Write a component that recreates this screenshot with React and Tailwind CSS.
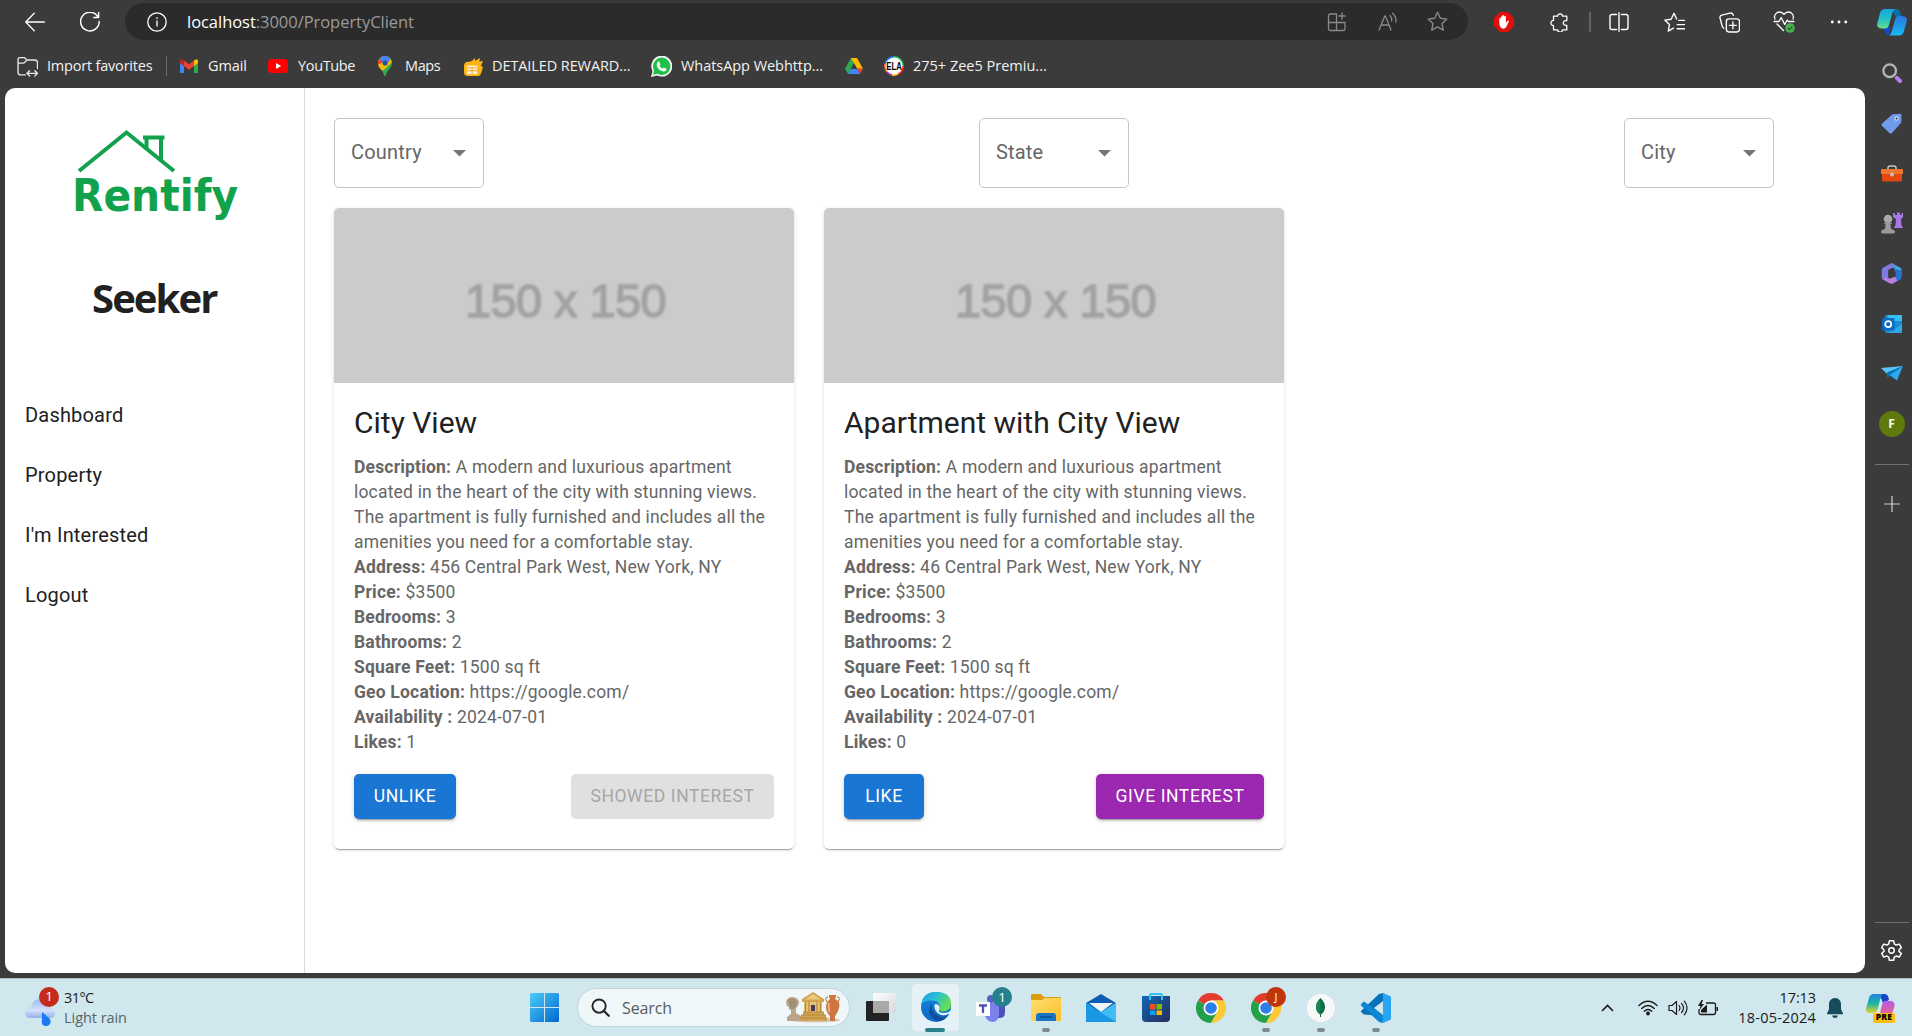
import React from "react";

const Svg = ({ w = 20, h, vb = "0 0 20 20", className = "", children }) => (
  <svg width={w} height={h || w} viewBox={vb} fill="none" className={"shrink-0 " + className}>
    {children}
  </svg>
);

const Line = ({ w = 20, c = "#fff", s = 1.3, vb, children }) => (
  <Svg w={w} vb={vb}>
    <g stroke={c} strokeWidth={s} strokeLinecap="round" strokeLinejoin="round">{children}</g>
  </Svg>
);

const STAR = "M10 1.2l2.7 5.7 6.2.8-4.6 4.3 1.2 6.2L10 15.2l-5.5 3 1.2-6.2L1.1 7.7l6.2-.8z";

/* ---------- browser toolbar ---------- */

const Cell = ({ className = "", children }) => (
  <div className={"flex h-full shrink-0 items-center justify-center " + className}>{children}</div>
);

function Toolbar() {
  return (
    <div className="flex h-[44px] items-center">
      <Cell className="ml-[20px] w-[30px]">
        <Line><path d="M19.4 10H1M9.2 1.3L.8 10l8.400 8.700" /></Line>
      </Cell>
      <Cell className="ml-[25px] w-[30px]">
        <Line s={1.5}><path d="M17.700 4.500A9.300 9.300 0 1 0 19.200 9.500M18.600 .6v4.800h-4.800" /></Line>
      </Cell>
      <div className="-mt-px ml-[20px] flex h-[37px] w-[1343px] items-center rounded-full bg-[#2b2b2b]">
        <Cell className="ml-[17px] w-[30px]">
          <Line s={1.300}><circle cx="10" cy="10" r="9.200" /><path d="M10 9v5" /><path d="M10 6v.1" strokeWidth="1.700" /></Line>
        </Cell>
        <span className="ml-[15px] mt-[1px] w-[900px] whitespace-nowrap font-['Open_Sans'] text-[16.500px] tracking-[-0.040px] text-[#9a9a9a]">
          <span className="text-white">localhost</span>:3000/PropertyClient
        </span>
        <Cell className="ml-auto w-[30px]">
          <Line w={20} c="#8a8a8a"><path d="M9.500 2H3.300Q1.500 2 1.500 3.800v13Q1.500 18.500 3.300 18.500h13.200q1.500 0 1.500-1.700V10.500H1.500M9.500 2v16.500M15 .8v6.400M11.800 4h6.400" /></Line>
        </Cell>
        <Cell className="ml-[21px] w-[30px]">
          <Line w={20} c="#8a8a8a"><path d="M1 18L6.800 4h.6L13 18M3 13h8M12 3.500q2.200 2.200 1.700 5.500M14.500 1.200q4.300 3.700 3.300 8.800" /></Line>
        </Cell>
        <Cell className="ml-[19px] mr-[16px] w-[30px]">
          <Line w={21} c="#8a8a8a"><path d={STAR} /></Line>
        </Cell>
      </div>
      <Cell className="ml-[22px] w-[28px]">
        <Svg w={20}>
          <path d="M6 0h8l6 6v8l-6 6H6l-6-6V6z" fill="#e40d0d" />
          <path d="M5.300 10V6.500q.8-1 1.500 0V4.700q.8-1.100 1.600 0V3.600q.9-1.100 1.800 0v1q.9-1 1.700 0v6.200l1.500-1.700q1.100-.7 1.700 0l-3 6.200Q10 18 7 15.800q-1.700-1.500-1.700-5.800z" fill="#fff" />
        </Svg>
      </Cell>
      <Cell className="ml-[28px] w-[28px]">
        <Line><path d="M3.500 4.200h4.200a2.400 2.400 0 1 1 4.800 0h4.300v4.500h-1.200a2.300 2.300 0 1 0 0 4.600h1.200v4.500h-4.300a2.400 2.400 0 0 1-4.800 0H3.500v-4.200a2.600 2.600 0 1 1 0-5.200z" /></Line>
      </Cell>
      <div className="ml-[15px] h-[20px] w-[2px] bg-[#646464]" />
      <Cell className="ml-[13px] w-[30px]">
        <Line s={1.400}><path d="M7.500 2.500H3Q1 2.500 1 4.500v11q0 2 2 2h4.500M12.500 2.500H17q2 0 2 2v11q0 2-2 2h-4.500M10 .7v18.600" /></Line>
      </Cell>
      <Cell className="ml-[25px] w-[30px]">
        <Line w={21}><path d="M12 6.700L9.500 1.200 6.800 6.900.7 7.700l4.500 4.300-1.100 6.200L9 15.400M14 8h5.500M12.500 12h7M12.500 16h7" /></Line>
      </Cell>
      <Cell className="ml-[25px] w-[30px]">
        <Line w={21}><rect x="7" y="6.500" width="12.500" height="12.500" rx="2.500" /><path d="M13.250 9.500v6.500M10 12.750h6.500M4.500 15.500Q3 14.500 2.600 12L1 5.700Q.6 3.700 2.500 3l8-2q2-.4 2.700 1.200l.4 1" /></Line>
      </Cell>
      <Cell className="ml-[25px] w-[30px]">
        <Svg w={22} vb="0 0 22 22">
          <g stroke="#fff" strokeWidth="1.300" strokeLinejoin="round" strokeLinecap="round">
            <path d="M2 8Q.3 4 4 1.700 8-.2 11 3.300 14-.2 18 1.700q3.500 2.300 2 6.300M1 10.500h5l2.200-4 3.500 7 2.500-4.500 1 1.500H21M4 13l6.500 6.500" />
          </g>
          <circle cx="17" cy="17" r="4.800" fill="#4caf50" />
          <path d="M14.800 17l1.600 1.600 3-3.100" stroke="#245c28" strokeWidth="1.200" />
        </Svg>
      </Cell>
      <Cell className="ml-[25px] w-[30px]">
        <Svg w={18}><g fill="#fff"><circle cx="2.500" cy="10" r="1.600" /><circle cx="10" cy="10" r="1.600" /><circle cx="17.500" cy="10" r="1.600" /></g></Svg>
      </Cell>
    </div>
  );
}

/* ---------- bookmarks ---------- */

const Bk = ({ icon, children, iconW, textW, gap, ml }) => (
  <div className={"flex items-center " + ml}>
    <div className={"flex shrink-0 justify-center " + iconW}>{icon}</div>
    {children && (
      <span className={"shrink-0 whitespace-nowrap font-['Open_Sans'] text-[14.500px] text-[#f2f2f2] " + gap + " " + textW}>{children}</span>
    )}
  </div>
);

function Bookmarks() {
  return (
    <div className="flex h-[44px] items-center">
      <Bk ml="ml-[17px]" iconW="w-[21px]" gap="ml-[9px]" textW="w-[107px] tracking-[-0.200px]"
        icon={<Line w={21} c="#e8e8e8"><path d="M8 18H3.500Q1 18 1 15.500V3.500Q1 1.500 3 1.500h4l2.500 2.300H17q2.500 0 2.500 2.500V12M1 6.800h5.500l3-3M10 16.500h9M12 14l-2.500 2.500L12 19M17 14l2.500 2.500L17 19" /></Line>}>
        Import favorites
      </Bk>
      <div className="ml-[12px] h-[20px] w-px bg-[#6a6a6a]" />
      <Bk ml="ml-[13px]" iconW="w-[18px]" gap="ml-[10px]" textW="w-[40px] tracking-[-0.100px]"
        icon={<Svg w={18} h={14} vb="0 0 18 14"><path d="M0 2v11q0 1 1 1h3V5.500z" fill="#4285f4" /><path d="M14 5.500V14h3q1 0 1-1V2z" fill="#34a853" /><path d="M14 1.500l2-1.200Q18 0 18 2v2l-4 3z" fill="#fbbc04" /><path d="M4 1.500L2 .3Q0 0 0 2v2l4 3z" fill="#c5221f" /><path d="M4 1.500L9 5.300l5-3.800V7l-5 3.800L4 7z" fill="#ea4335" /></Svg>}>
        Gmail
      </Bk>
      <Bk ml="ml-[20px]" iconW="w-[20px]" gap="ml-[10px]" textW="w-[58px] tracking-[-0.350px]"
        icon={<Svg w={20} h={14} vb="0 0 20 14"><rect width="20" height="14" rx="3.500" fill="#f00" /><path d="M8 4l5.200 3L8 10z" fill="#fff" /></Svg>}>
        YouTube
      </Bk>
      <Bk ml="ml-[22px]" iconW="w-[14px]" gap="ml-[13px]" textW="w-[37px] tracking-[-0.400px]"
        icon={
          <Svg w={14} h={20} vb="0 0 14 20">
            <clipPath id="pin"><path d="M7 0a7 7 0 0 1 7 7c0 5-5 7-6 12q-1 2-2 0C5 14 0 12 0 7a7 7 0 0 1 7-7z" /></clipPath>
            <g clipPath="url(#pin)"><path d="M0 0h14v20H0z" fill="#34a853" /><path d="M0 0h14L3 14H0z" fill="#fbbc04" /><path d="M0 0h14L0 9z" fill="#ea4335" /><path d="M2 0h12v3L7 9 2 3z" fill="#4285f4" /><path d="M13 3L2 15l4-1 8-8z" fill="#fbbc04" /></g>
            <circle cx="7" cy="7" r="2.500" fill="#2a4f9c" />
          </Svg>
        }>
        Maps
      </Bk>
      <Bk ml="ml-[22px]" iconW="w-[19px]" gap="ml-[9px]" textW="w-[139px] tracking-[-0.100px]"
        icon={<Svg w={19} h={19}><path d="M5 5q4 0 6-4l1 3 5-3-1 4 4-1-2 5 2 2-2 6q-1 3-4 3H4q-4 0-4-4v-7q0-4 5-4z" fill="#fdb515" /><path d="M3 9h11v9H3z" fill="#fff4d8" /><path d="M3 11.500h11M3 14.500h11M8.500 11.500V18" stroke="#f59a1c" /></Svg>}>
        DETAILED REWARD...
      </Bk>
      <Bk ml="ml-[20px]" iconW="w-[21px]" gap="ml-[9px]" textW="w-[143px] tracking-[-0.050px]"
        icon={<Svg w={21}><path d="M0 20l1.500-5.500A10 10 0 1 1 5.800 18.600z" fill="#f5f5f5" /><path d="M2 18l1-4A8.300 8.300 0 1 1 6 17z" fill="#1fbf4a" /><path d="M6.500 5.500l1.300-.2 1.200 2.800-.9 1.100q1 2 3 2.900l1-1.200 2.700 1.300q0 2.300-2.600 2.500-5.200-.6-6.700-5.700-.2-2.300 1-3.500z" fill="#fff" /></Svg>}>
        WhatsApp Webhttp...
      </Bk>
      <Bk ml="ml-[21px]" iconW="w-[18px]"
        icon={<Svg w={18} h={16} vb="0 0 18 16"><path d="M6 0h6L3 16 0 10.700z" fill="#2da94f" /><path d="M6 0h6l6 10.700h-6z" fill="#ffba00" /><path d="M12 10.700h6L15 16z" fill="#ea4335" /><path d="M6 10.700h6L15 16H3z" fill="#4285f4" /><path d="M9 5.300l3 5.400H6z" fill="#3b3b3b" /></Svg>} />
      <Bk ml="ml-[21px]" iconW="w-[20px]" gap="ml-[9px]" textW="w-[140px]"
        icon={
          <Svg w={20} className="overflow-visible">
            <circle cx="10" cy="10" r="9.200" fill="#fff" />
            <g strokeWidth="1.500"><path d="M1 8A9.200 9.200 0 0 1 10 .8" stroke="#1877f2" /><path d="M10 .8A9.200 9.200 0 0 1 19.200 10" stroke="#1fc95b" /><path d="M19.200 10A9.200 9.200 0 0 1 14 18.200" stroke="#f22" /><path d="M14 18.200A9.200 9.200 0 0 1 8 19" stroke="#fb0" /><path d="M8 19A9.200 9.200 0 0 1 3 16" stroke="#a3d" /><path d="M3 16A9.200 9.200 0 0 1 1 8" stroke="#f55" /></g>
            <text x="2.300" y="13.700" fontFamily="Liberation Sans" fontWeight="bold" fontSize="10" textLength="15.500" lengthAdjust="spacingAndGlyphs" fill="#000">ELA</text>
          </Svg>
        }>
        275+ Zee5 Premiu...
      </Bk>
    </div>
  );
}

/* ---------- right rail ---------- */

function CopilotLogo() {
  return (
    <Svg w={30} h={28} vb="0 0 30 28">
      <defs>
        <linearGradient id="cpa" x1="0" y1="0" x2="0" y2="1"><stop stopColor="#0fa8e0" /><stop offset=".5" stopColor="#22c0c8" /><stop offset="1" stopColor="#67dd86" /></linearGradient>
        <linearGradient id="cpb" x1="0" y1="0" x2="0" y2="1"><stop stopColor="#2a78e0" /><stop offset="1" stopColor="#18b9f5" /></linearGradient>
      </defs>
      <path d="M15 1h4q3.500 0 4.300 3.500L24.500 9h-6z" fill="#0a6fa8" />
      <path d="M6.500 19h7L12 27q-3.500 0-4.300-4z" fill="#1747d0" />
      <path d="M8 1h10q-2 1-3 5l-3 11q-1 3.500-4 3.500H4Q-.6 20 .3 15.500L3 5Q4.200 1 8 1z" fill="url(#cpa)" />
      <path d="M22 8h3.500q5 .5 4.200 5L27 23q-1.200 4.500-5 4.500H12q2.200-1.500 3-5l3-11Q19 8 22 8z" fill="url(#cpb)" />
    </Svg>
  );
}

const RailCell = ({ children }) => (
  <div className="flex h-[50.100px] shrink-0 items-center justify-center">{children}</div>
);

function Rail() {
  return (
    <div className="flex h-full w-[47px] shrink-0 flex-col pl-[7px] pr-px">
      <div className="flex h-[48px] shrink-0 items-center justify-center pb-[4px]"><CopilotLogo /></div>
      <RailCell><Svg><circle cx="7.700" cy="7.700" r="6.300" stroke="#b5b5b5" strokeWidth="2.300" /><path d="M14.800 14.800l3.200 3.200" stroke="#b67df0" strokeWidth="4" strokeLinecap="round" /></Svg></RailCell>
      <RailCell><Svg w={21}><path d="M11 1.200L18 .8q1.500 0 1.500 1.500L19.300 9 10.500 19q-1.200 1-2.400 0L1 12.300q-1-1.200 0-2.300z" fill="#6f9bea" /><circle cx="14.800" cy="5.300" r="1.600" fill="#3b3b3b" stroke="#dbe8ff" /></Svg></RailCell>
      <RailCell><Svg w={22} h={17} vb="0 0 22 17"><path d="M7 5V3q0-2 2-2h4q2 0 2 2v2" stroke="#c9c9c9" strokeWidth="1.500" /><path d="M1 4h20q1 0 1 1v4H0V5q0-1 1-1z" fill="#f4762d" /><path d="M1 9h20v6q0 1.500-1.500 1.500h-17Q1 16.500 1 15z" fill="#e2470d" /><circle cx="11" cy="9.500" r="2" fill="#c4c4c4" /></Svg></RailCell>
      <RailCell><Svg w={22} h={22} vb="0 0 22 22"><path d="M12 1h2v2h2V.5h3V3h1.500V1H22v4l-2 2 .5 6 1.500 3h-9l1.500-3 .5-6-3-2z" fill="#a978e8" /><circle cx="7" cy="7" r="4.300" fill="#a9a9a9" /><path d="M3 12q0-1.500 1.500-1.500h5Q11 10.500 11 12H9.500l.5 5q4 1 4 3 0 1.500-2 1.500H2Q0 21.500 0 20q0-2 4-3l.5-5z" fill="#9a9a9a" /></Svg></RailCell>
      <RailCell>
        <Svg w={21}>
          <path d="M10 0l8.500 4.500q1 .6 1 2V12L13 8V5L9 3z" fill="#3fa9ea" />
          <path d="M10 0L1.800 4.500Q.7 5.200.7 6.500v7.300q0 1.200 1 1.800L7 13V6.500L14 3z" fill="#7b7be0" />
          <path d="M19.500 7v7q0 1.200-1 1.800L14 18.300 10 15l3-2V6z" fill="#2872cf" />
          <path d="M1.700 15.600l7 3.900q1.300.7 2.600 0L15.500 17 13 12.300 8.500 15 5 13z" fill="#bb7fdf" />
          <path d="M7 7.500l4-1.500 3 2.500v4L10.500 14 7 12z" fill="#3b3b3b" />
        </Svg>
      </RailCell>
      <RailCell>
        <Svg w={20} h={18} vb="0 0 20 18"><rect x="3" width="17" height="18" rx="1.500" fill="#1a8ad4" /><path d="M5 0h14q1 0 1 1v5H8z" fill="#37bdf0" /><path d="M20 9v7.500q0 1.500-1.500 1.500H5l8-4z" fill="#2ba7ea" /><rect y="3" width="12.500" height="12.500" rx="1.300" fill="#0a6cc4" /><circle cx="6.200" cy="9.200" r="3" stroke="#fff" strokeWidth="1.700" /></Svg>
      </RailCell>
      <RailCell><Svg w={22} h={15} vb="0 0 22 15"><path d="M0 2L22 0 6 8z" fill="#58c5fa" /><path d="M22 0L6 6.500V12z" fill="#0c6cb4" /><path d="M22 0L8.500 9 16 14.500z" fill="#2ba8ee" /></Svg></RailCell>
      <RailCell><div className="flex size-[26px] items-center justify-center rounded-full bg-[#5f7a0c] font-['Open_Sans'] text-[12px] font-bold text-white">F</div></RailCell>
      <div className="mx-auto mt-[15px] h-px w-[34px] shrink-0 bg-[#707070]" />
      <div className="flex h-[78px] shrink-0 items-center justify-center"><Line w={16} c="#d0d0d0" s={1.500}><path d="M10 0v20M0 10h20" /></Line></div>
      <div className="mx-auto mt-auto h-px w-[34px] shrink-0 bg-[#707070]" />
      <div className="flex h-[55px] shrink-0 items-center justify-center">
        <Line w={21} c="#fff" s={1.400}><path d="M8 .8h4l.7 3 1.700 1 3-.9 2 3.400-2.200 2v1.500l2.200 2-2 3.400-3-.9-1.700 1-.7 3H8l-.7-3-1.700-1-3 .9-2-3.400 2.200-2V9.300l-2.200-2 2-3.400 3 .9 1.700-1z" /><circle cx="10" cy="10" r="2.600" /></Line>
      </div>
    </div>
  );
}

/* ---------- property page ---------- */

function Sidebar() {
  return (
    <div className="flex w-[300px] shrink-0 flex-col border-r border-[#dcdcdc]">
      <svg width="180" height="106" viewBox="0 0 180 106" className="ml-[68px] mt-[38px] shrink-0" fill="none">
        <g stroke="#12a24b" strokeWidth="4">
          <path d="M6 45L53.500 6.500 101 45" />
          <path d="M70 11.500h21.500M73.500 11v13M88 11v23" />
        </g>
        <text x="-1" y="85" fontFamily="DejaVu Sans" fontWeight="bold" fontSize="44" textLength="166" lengthAdjust="spacingAndGlyphs" fill="#12a24b">Rentify</text>
      </svg>
      <h1 className="mt-[34px] h-[64px] pl-[87px] font-['Open_Sans'] text-[40px] font-bold leading-[64px] tracking-[-1.900px] text-[#212121]">Seeker</h1>
      <nav className="mt-[55px] flex flex-col pl-[20px]">
        {["Dashboard", "Property", "I'm Interested", "Logout"].map((t) => (
          <a key={t} className="flex h-[60px] items-center font-['Roboto'] text-[20px] tracking-[0.190px] text-[#212121]">{t}</a>
        ))}
      </nav>
    </div>
  );
}

const Select = ({ label }) => (
  <div className="flex h-[70px] w-[150px] items-center justify-between rounded-[5px] border border-[#c4c4c4] pl-[16px] pr-[17px]">
    <span className="-mt-[2px] font-['Roboto'] text-[20px] tracking-[0.190px] text-[#666]">{label}</span>
    <svg width="13" height="7" viewBox="0 0 13 7"><path d="M0 0h13L6.500 6.500z" fill="#757575" /></svg>
  </div>
);

const BTN = "flex h-[45px] items-center justify-center rounded-[5px] font-['Roboto'] text-[17.500px] font-normal uppercase tracking-[0.600px] ";
const RAISED = "text-white shadow-[0_4px_1px_-3px_rgba(0,0,0,0.2),0_2px_2px_0_rgba(0,0,0,0.14),0_1px_6px_0_rgba(0,0,0,0.12)] ";

function Card({ title, address, likes, children }) {
  const rows = [
    ["Description:", "A modern and luxurious apartment located in the heart of the city with stunning views. The apartment is fully furnished and includes all the amenities you need for a comfortable stay."],
    ["Address:", address],
    ["Price:", "$3500"],
    ["Bedrooms:", "3"],
    ["Bathrooms:", "2"],
    ["Square Feet:", "1500 sq ft"],
    ["Geo Location:", "https://google.com/"],
    ["Availability :", "2024-07-01"],
    ["Likes:", likes],
  ];
  return (
    <article className="flex h-[641px] w-[460px] flex-col overflow-hidden rounded-[5px] bg-white shadow-[0_3px_1px_-2px_rgba(0,0,0,0.2),0_1px_1px_0_rgba(0,0,0,0.14),0_1px_4px_0_rgba(0,0,0,0.12)]">
      <div className="flex h-[175px] shrink-0 items-center justify-center bg-[#cbcbcb] pl-[3px] pt-[11px]">
        <span className="whitespace-nowrap font-['Liberation_Sans'] text-[47px] tracking-[-0.600px] text-[#a2a2a2] blur-[0.9px] [-webkit-text-stroke:1.5px_#a2a2a2]">150 x 150</span>
      </div>
      <div className="px-[20px] pt-[20px]">
        <h2 className="h-[40px] font-['Roboto'] text-[30px] leading-[40px] text-[#212121]">{title}</h2>
        <div className="mt-[11.500px] font-['Roboto'] text-[17.500px] leading-[25.020px] tracking-[0.187px] text-[#666]">
          {rows.map(([k, v]) => (
            <p key={k}><b className="font-bold">{k}</b> {v}</p>
          ))}
        </div>
      </div>
      <div className="mt-[19px] flex justify-between px-[20px]">{children}</div>
    </article>
  );
}

function Page() {
  return (
    <div className="ml-[5px] flex h-[885px] w-[1860px] overflow-hidden rounded-[10px] bg-white">
      <Sidebar />
      <main className="flex flex-col pl-[29px] pt-[30px]">
        <div className="flex gap-[495px]">
          <Select label="Country" /><Select label="State" /><Select label="City" />
        </div>
        <div className="mt-[20px] flex gap-[30px]">
          <Card title="City View" address="456 Central Park West, New York, NY" likes="1">
            <button className={BTN + RAISED + "w-[102px] bg-[#1976d2]"}>Unlike</button>
            <button className={BTN + "w-[203px] bg-[#e0e0e0] text-[#a6a6a6]"}>Showed Interest</button>
          </Card>
          <Card title="Apartment with City View" address="46 Central Park West, New York, NY" likes="0">
            <button className={BTN + RAISED + "w-[80px] bg-[#1976d2]"}>Like</button>
            <button className={BTN + RAISED + "w-[168px] bg-[#9c27b0]"}>Give Interest</button>
          </Card>
        </div>
      </main>
    </div>
  );
}

/* ---------- taskbar ---------- */

const App55 = ({ dot, children }) => (
  <div className="relative flex h-full w-[55px] shrink-0 items-center justify-center">
    {children}
    {dot && <div className="absolute bottom-[4px] left-[24px] h-[4px] w-[8px] rounded-full bg-[#7f8b90]" />}
  </div>
);

const Chrome = () => (
  <Svg w={30} vb="0 0 30 30">
    <path d="M15 15L2 7.500A15 15 0 0 1 28 7.500H15z" fill="#e33b2e" />
    <path d="M15 15l6.500 3.800L15 30A15 15 0 0 1 2 7.500z" fill="#22a04a" />
    <path d="M15 7.500h13A15 15 0 0 1 15 30l6.500-11.200z" fill="#fcc934" />
    <circle cx="15" cy="15" r="7.500" fill="#fff" />
    <circle cx="15" cy="15" r="5.800" fill="#2f7de9" />
  </Svg>
);

const Badge = ({ className, children }) => (
  <span className={"absolute flex size-[20px] items-center justify-center rounded-full font-['Open_Sans'] text-[13.500px] font-medium text-white " + className}>{children}</span>
);

function Taskbar() {
  return (
    <div className="flex h-[58px] items-center border-t border-[#a9bcc2] bg-[#cfe7ed] font-['Open_Sans']">
      <div className="relative ml-[25px] h-[36px] w-[34px]">
        <Svg w={31} h={28} vb="0 0 31 28" className="mt-[9px]">
          <defs><linearGradient id="cl" x1="0" y1="0" x2="0" y2="1"><stop stopColor="#9bbcf5" /><stop offset=".6" stopColor="#d5e0f8" /><stop offset="1" stopColor="#8fb0ee" /></linearGradient></defs>
          <path d="M6 8Q8 0 15 0q8 0 9 8 6 1 6 6 0 5-6 5H6q-6 0-6-5.500T6 8z" fill="url(#cl)" />
          <path d="M17 13l7 6q3 3 .5 6.500-3.500 3-7 0-1-1-.5-6z" fill="#187bf5" />
        </Svg>
        <Badge className="left-[14px] top-[-3px] bg-[#c42b1c]">1</Badge>
      </div>
      <div className="ml-[5px] w-[200px] whitespace-nowrap text-[14.500px] leading-[20px]">
        <div className="tracking-[-0.600px] text-[#1b1b1b]">31°C</div>
        <div className="tracking-[-0.050px] text-[#56656a]">Light rain</div>
      </div>
      <div className="ml-[266px] w-[29px]">
        <Svg w={29} vb="0 0 29 29">
          <defs><linearGradient id="wn" x1="0" y1="0" x2="1" y2="1"><stop stopColor="#4ccdfb" /><stop offset="1" stopColor="#0067cf" /></linearGradient></defs>
          <path d="M1 0h13v14H0V1zM15 0h13l1 1v13H15zM0 15h14v14H1l-1-1zM15 15h14v13l-1 1H15z" fill="url(#wn)" />
        </Svg>
      </div>
      <div className="ml-[18px] flex h-[39px] w-[273px] items-center rounded-full border border-[#c2d3d9] bg-[#f0f7f9] pl-[13px] pr-[8px]">
        <Svg w={19}><circle cx="8.500" cy="8.500" r="7" stroke="#262626" strokeWidth="2" /><path d="M13.700 13.700l5 5" stroke="#262626" strokeWidth="2.400" strokeLinecap="round" /></Svg>
        <span className="ml-[12px] mt-px text-[16px] tracking-[-0.100px] text-[#565d60]">Search</span>
        <Svg w={56} h={31} vb="0 0 56 31" className="ml-auto">
          <ellipse cx="30" cy="28" rx="25" ry="2.500" fill="#b49a80" opacity=".5" />
          <path d="M1 10q1-5 7-5 6 1 6 6-1 4-3 5v5l5 3v5H2v-4l4-3v-4q-3 0-2-3l-2-1z" fill="#b9a58b" />
          <path d="M3 8q4-4 9 1l-1 6q-4 4-6 1z" fill="#8c7c68" opacity=".5" />
          <path d="M19 9h18v12H19z" fill="#e4c27c" />
          <path d="M17 7L28 0l11 7v3H17zM18 20h21v3H18zM16 23h25v3H16zM14 26h28v3H14z" fill="#d3a34f" />
          <path d="M20.500 10v10M24 10v10M32 10v10M35.500 10v10" stroke="#b98734" strokeWidth="1.200" />
          <path d="M16 23h25M14 26h28M18 20h21" stroke="#a67a35" strokeWidth=".7" />
          <path d="M26 13h4v6h-4z" fill="#4d3760" />
          <path d="M20 7.500L28 2l8 5.500z" fill="#edc97c" />
          <path d="M44 3h7v2l-1 2q6 3 4 9-2 6-4 8v5h-5v-5q-4-4-4-9 0-5 4-8l-1-2z" fill="#cf7640" />
          <path d="M42 10q-3-5 1-5M53 10q3-5-1-5" stroke="#b4602c" />
          <path d="M44 11q-1 6 1 9" stroke="#f0b088" strokeWidth="2" />
        </Svg>
      </div>
      <div className="ml-[3px] flex h-full">
        <App55>
          <Svg w={30} h={29} vb="0 0 30 29">
            <defs><linearGradient id="tv" x1="0" y1="0" x2="1" y2="1"><stop stopColor="#fff" /><stop offset="1" stopColor="#d4d8da" /></linearGradient></defs>
            <rect y="8" width="23" height="20" rx="1" fill="#232323" />
            <rect x="7" width="23" height="20" rx="1" fill="url(#tv)" />
            <path d="M7 8h16v12H7z" fill="#a9a9a9" />
          </Svg>
        </App55>
        <App55>
          <div className="relative -mt-[1px] flex size-[49px] items-center justify-center rounded-[5px] border border-[#d8e4e8] bg-[#e4f1f6]">
            <Svg w={30} vb="0 0 30 30">
              <defs>
                <linearGradient id="ea" x1="0" y1="0" x2="1" y2=".5"><stop stopColor="#1c9ee8" /><stop offset=".5" stopColor="#2bc0d0" /><stop offset="1" stopColor="#68de4f" /></linearGradient>
                <linearGradient id="eb" x1="0" y1="0" x2="0" y2="1"><stop stopColor="#1683d8" /><stop offset="1" stopColor="#0a6cc8" /></linearGradient>
              </defs>
              <circle cx="15" cy="15" r="15" fill="url(#eb)" />
              <path d="M.3 12Q2 0 15 0q15 0 15 12 0 7-7.500 7.500-5-.2-4-2.500Q20 9 12 8.500 4 8 .3 12z" fill="url(#ea)" />
              <path d="M11 12q-4 4-2.500 9.500Q11 29 19 29q5-1 8-6-6 4-11 0-6-4-5-11z" fill="#124e9e" />
              <path d="M18.500 17q-2 4 4 4 5 0 8-3v3.500L27.500 22q-6 3-11-1Q12 16 14 12q5 0 4.500 5z" fill="#e4f1f6" />
            </Svg>
            <div className="absolute bottom-[-1px] left-[13px] h-[4px] w-[20px] rounded-full bg-[#27808e]" />
          </div>
        </App55>
        <App55>
          <Svg w={30} vb="0 0 30 30" className="overflow-visible">
            <circle cx="15" cy="6" r="4" fill="#5b5fc7" /><path d="M15 11h14v8q0 6-5 6h-5z" fill="#4e4fbe" /><path d="M9 10h14v12q-1 7-7 7-6-1-7-7z" fill="#7b83eb" />
            <rect x="0" y="9" width="14" height="14" fill="#fff" />
            <path d="M3 12.500h8M7 12.500V20" stroke="#4b53bc" strokeWidth="2.300" />
          </Svg>
          <Badge className="left-[29px] top-[8px] bg-[#27808e]">1</Badge>
        </App55>
        <App55 dot>
          <Svg w={30} h={27} vb="0 0 30 27">
            <defs><linearGradient id="fd" x1="0" y1="0" x2="1" y2="1"><stop stopColor="#ffdf72" /><stop offset="1" stopColor="#fdbf2b" /></linearGradient></defs>
            <path d="M1 0h9l3 3h16q1 0 1 1v5H0V1q0-1 1-1z" fill="#dd9c0c" /><path d="M0 6h11l3-2h15q1 0 1 1v21q0 1-1 1H1q-1 0-1-1z" fill="url(#fd)" />
            <path d="M5 27v-5q0-3 3-3h14q3 0 3 3v5z" fill="#1475c4" /><path d="M9 23h12" stroke="#0b4f8f" strokeWidth="1.500" />
          </Svg>
        </App55>
        <App55>
          <Svg w={30} h={28} vb="0 0 30 28"><path d="M0 9L15 0l15 9-15 10z" fill="#0d5db3" /><path d="M3 9h24L15 18z" fill="#f1f4f6" /><path d="M0 9l16 10-14 9H0z" fill="#1e9be6" /><path d="M30 9v19H0l15-10z" fill="#3fbcf1" /><path d="M0 9l30 19H0z" fill="#1b98e4" /></Svg>
        </App55>
        <App55>
          <Svg w={30} h={29} vb="0 0 30 29">
            <defs><linearGradient id="st" x1="0" y1="0" x2="1" y2="1"><stop stopColor="#0f68b8" /><stop offset="1" stopColor="#282c59" /></linearGradient></defs>
            <path d="M1 3h28v22q0 4-4 4H5q-4 0-4-4z" fill="url(#st)" /><path d="M9 7V2q0-1 1-1h10q1 0 1 1v5" stroke="#35c1f1" strokeWidth="2" />
            <path d="M9 11h5.500v5.500H9z" fill="#f25022" /><path d="M15.500 11H21v5.500h-5.500z" fill="#7fba00" /><path d="M9 17.500h5.500V22H9z" fill="#00a4ef" /><path d="M15.500 17.500H21V22h-5.500z" fill="#ffb900" />
          </Svg>
        </App55>
        <App55><Chrome /></App55>
        <App55 dot><Chrome /><Badge className="left-[28px] top-[8px] bg-[#bf360c]"><span className="text-[11px]">J</span></Badge></App55>
        <App55 dot>
          <div className="flex size-[28px] items-center justify-center rounded-full bg-[#f8f8f8]">
            <Svg w={9} h={19} vb="0 0 9 19"><path d="M4.500 0Q9 4.500 9 9q0 4.500-4 7.500V19H4v-2.500Q0 13.500 0 9q0-4.500 4.500-9z" fill="#0c6b43" /><path d="M4.500 0Q0 4.500 0 9q0 4.500 4.500 7.500z" fill="#1a8357" /></Svg>
          </div>
        </App55>
        <App55 dot>
          <Svg w={30} vb="0 0 30 30"><path d="M22 7v16L3 9 0 11.500v1L18 29l4 1z" fill="#1089d6" /><path d="M22 7v16L3 21.500 0 19v-1L18 1l4-1z" fill="#0872b9" /><path d="M22 22L3 8.500l-2.500 2L0 12l21 18z" fill="#0d87d3" /><path d="M22 0l7 3q1 .5 1 2v20q0 1.500-1 2l-7 3-2-1.500 2-.5z" fill="#27a4f2" /><path d="M22 8v14l-9-7z" fill="#cfe7ed" /></Svg>
        </App55>
      </div>
      <div className="ml-auto mr-[17px] flex h-full items-center">
        <Svg w={13} h={8} vb="0 0 13 8"><path d="M1 7l5.500-5.500L12 7" stroke="#1c1c1c" strokeWidth="1.600" /></Svg>
        <Svg w={20} h={16} vb="0 0 20 16" className="ml-[24px]"><g stroke="#1c1c1c" strokeWidth="1.400" strokeLinecap="round"><path d="M1 5.500Q10-3 19 5.500M3.700 8.500Q10 2.500 16.300 8.500M6.300 11.300Q10 7.800 13.700 11.300" /></g><circle cx="10" cy="13.500" r="1.900" fill="#1c1c1c" /></Svg>
        <Svg w={20} h={16} vb="0 0 20 16" className="ml-[10px]"><g stroke="#1c1c1c" strokeWidth="1.200" strokeLinecap="round" strokeLinejoin="round"><path d="M1 5.500h3L8.500 1.500v13L4 10.500H1zM11 5.500q2 2.500 0 5M13.500 3.300q4 4.700 0 9.400M16.300 1.200q5.500 6.800 0 13.600" /></g></Svg>
        <Svg w={20} h={16} vb="0 0 20 16" className="ml-[10px]"><g stroke="#1c1c1c" strokeWidth="1.300" strokeLinejoin="round"><path d="M8 3h7.500Q17.500 3 17.500 5v7.500q0 2-2 2H3q-2 0-2-2V9" /></g><path d="M18.500 7H20v4h-1.500zM3 12.500V10l6-5.500v8zM3.500 0L0 6h2.500L1.500 10 6 4H3.500L5 0z" fill="#1c1c1c" /></Svg>
        <div className="ml-[18px] w-[80px] whitespace-nowrap text-right text-[14.500px] leading-[20px] text-[#1b1b1b]">
          <div className="tracking-[-0.100px]">17:13</div>
          <div className="tracking-[0.200px]">18-05-2024</div>
        </div>
        <Svg w={16} h={20} vb="0 0 16 20" className="ml-[11px]"><path d="M8 0q6 .5 6 6.500V11l2 4.500v.8H0v-.8L2 11V6.500Q2 .5 8 0zM5 17.500h6Q10.500 20 8 20t-3-2.500z" fill="#154b5a" /></Svg>
        <div className="relative ml-[23px] h-[28px] w-[29px]">
          <Svg w={29} h={26} vb="0 0 29 26">
            <defs>
              <linearGradient id="pa" x1="0" y1="0" x2="0" y2="1"><stop stopColor="#2383e8" /><stop offset=".5" stopColor="#1bb59f" /><stop offset="1" stopColor="#e5d22a" /></linearGradient>
              <linearGradient id="pb" x1="0" y1="0" x2="0" y2="1"><stop stopColor="#b958e4" /><stop offset="1" stopColor="#f5657b" /></linearGradient>
            </defs>
            <path d="M13 0h6q3 0 4 6l-6 3z" fill="#1545c9" />
            <path d="M8 0h9q-2 1-3 6l-2 8q-1 5-5 5H3q-4-1-2.500-6L3 4Q4 0 8 0z" fill="url(#pa)" />
            <path d="M19 7h6q4 .5 3.500 5L26 20q-1 4-5 4H11q2-1 3-5l2-8q1-4 3-4z" fill="url(#pb)" />
          </Svg>
          <span className="absolute bottom-[-1px] left-[7px] flex h-[10px] w-[22px] items-center justify-center rounded-[2px] bg-[#fdbd10] text-[8.500px] font-extrabold leading-none tracking-[0.300px] text-black">PRE</span>
        </div>
      </div>
    </div>
  );
}

export default function App() {
  return (
    <div className="flex h-[1036px] w-[1912px] flex-col overflow-hidden bg-[#3b3b3b]">
      <div className="flex h-[978px] shrink-0">
        <div className="flex w-[1865px] shrink-0 flex-col">
          <Toolbar />
          <Bookmarks />
          <Page />
        </div>
        <Rail />
      </div>
      <Taskbar />
    </div>
  );
}
